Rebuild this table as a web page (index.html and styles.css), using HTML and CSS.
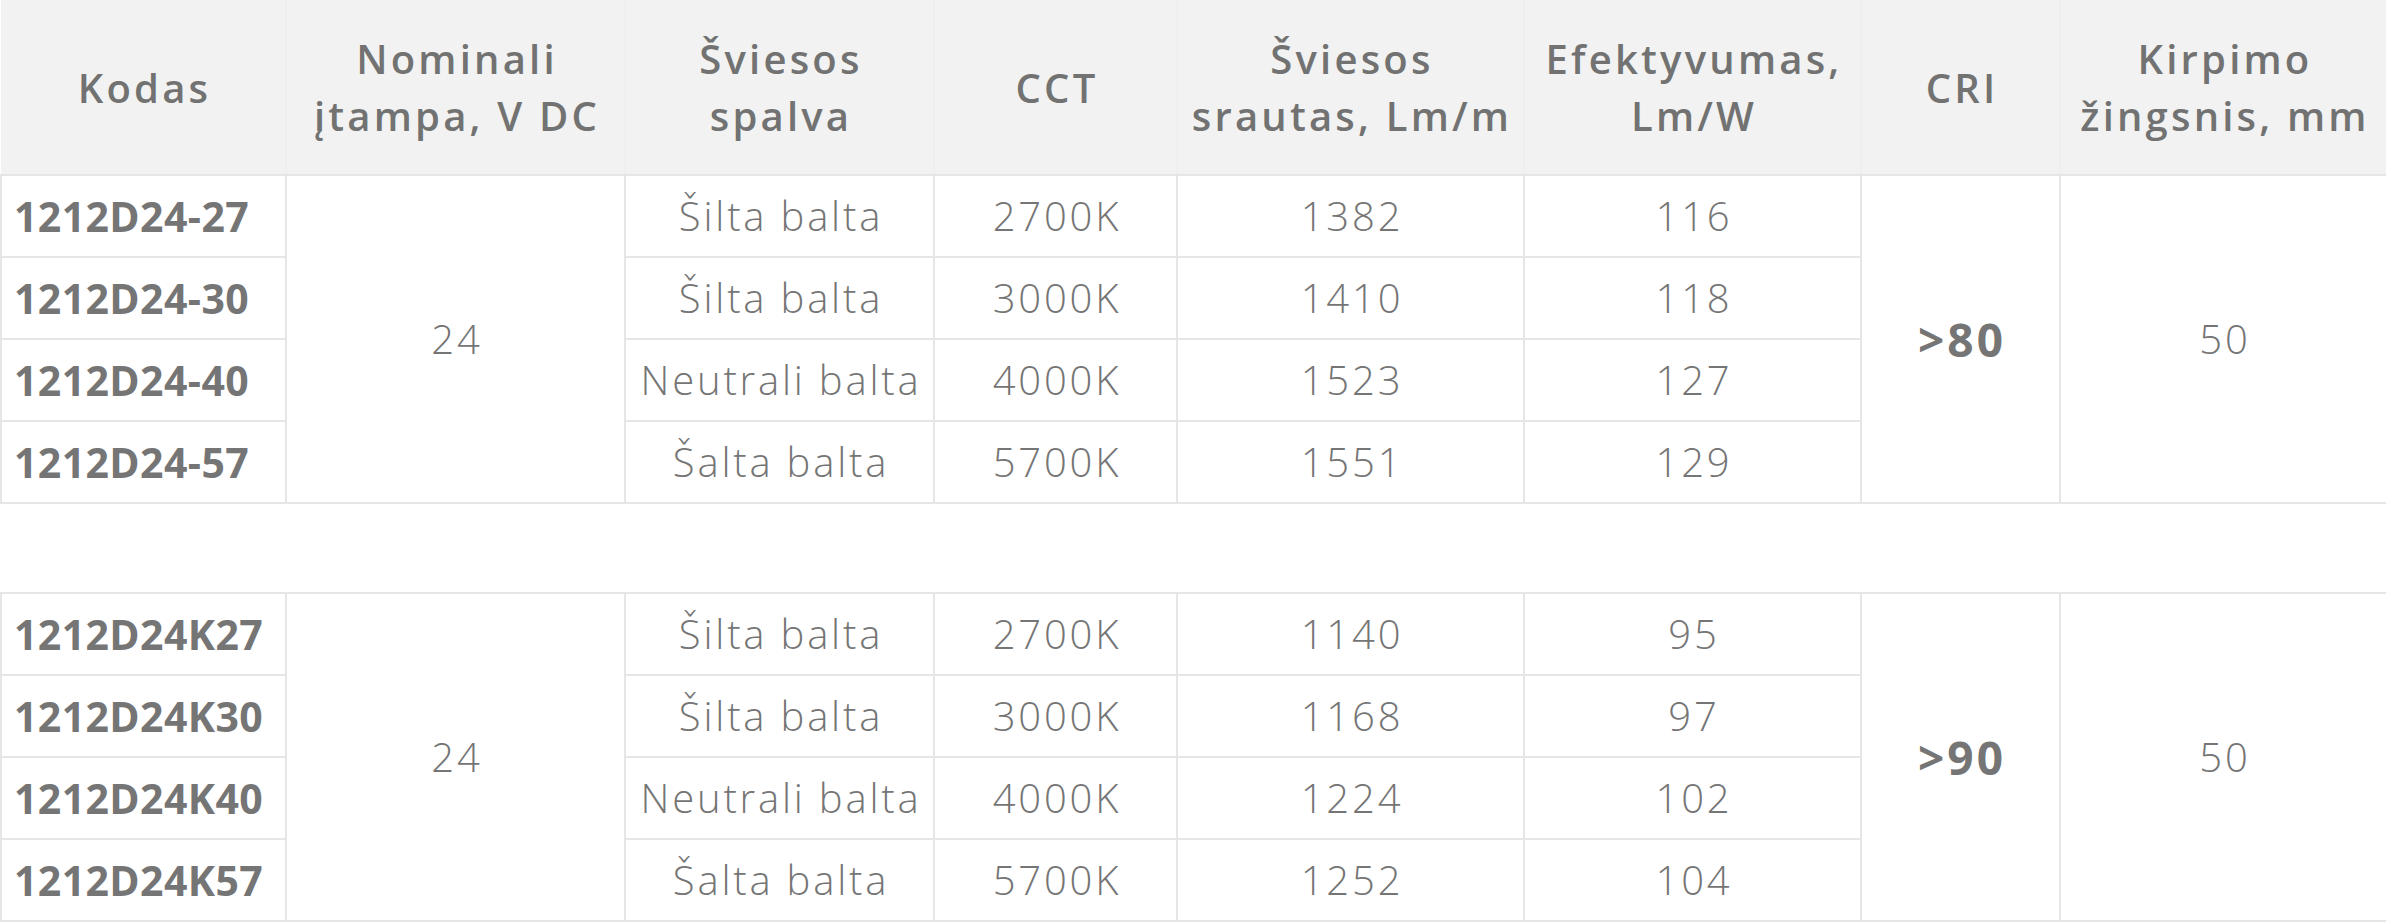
FILE: index.html
```html
<!DOCTYPE html>
<html lang="lt">
<head>
<meta charset="utf-8">
<title>Specifikacijos</title>
<link rel="stylesheet" href="styles.css">
</head>
<body>
<table class="spec">
  <colgroup>
    <col class="c1"><col class="c2"><col class="c3"><col class="c4"><col class="c5"><col class="c6"><col class="c7"><col class="c8">
  </colgroup>
  <thead>
    <tr>
      <th>Kodas</th>
      <th>Nominali<br>įtampa, V DC</th>
      <th>Šviesos<br>spalva</th>
      <th>CCT</th>
      <th>Šviesos<br>srautas, Lm/m</th>
      <th>Efektyvumas,<br>Lm/W</th>
      <th>CRI</th>
      <th>Kirpimo<br>žingsnis, mm</th>
    </tr>
  </thead>
  <tbody>
    <tr>
      <td class="code">1212D24-27</td>
      <td rowspan="4">24</td>
      <td>Šilta balta</td>
      <td>2700K</td>
      <td>1382</td>
      <td>116</td>
      <td rowspan="4" class="cri">&gt;80</td>
      <td rowspan="4">50</td>
    </tr>
    <tr>
      <td class="code">1212D24-30</td>
      <td>Šilta balta</td>
      <td>3000K</td>
      <td>1410</td>
      <td>118</td>
    </tr>
    <tr>
      <td class="code">1212D24-40</td>
      <td>Neutrali balta</td>
      <td>4000K</td>
      <td>1523</td>
      <td>127</td>
    </tr>
    <tr>
      <td class="code">1212D24-57</td>
      <td>Šalta balta</td>
      <td>5700K</td>
      <td>1551</td>
      <td>129</td>
    </tr>
  </tbody>
</table>

<table class="spec second">
  <colgroup>
    <col class="c1"><col class="c2"><col class="c3"><col class="c4"><col class="c5"><col class="c6"><col class="c7"><col class="c8">
  </colgroup>
  <tbody>
    <tr>
      <td class="code">1212D24K27</td>
      <td rowspan="4">24</td>
      <td>Šilta balta</td>
      <td>2700K</td>
      <td>1140</td>
      <td>95</td>
      <td rowspan="4" class="cri">&gt;90</td>
      <td rowspan="4">50</td>
    </tr>
    <tr>
      <td class="code">1212D24K30</td>
      <td>Šilta balta</td>
      <td>3000K</td>
      <td>1168</td>
      <td>97</td>
    </tr>
    <tr>
      <td class="code">1212D24K40</td>
      <td>Neutrali balta</td>
      <td>4000K</td>
      <td>1224</td>
      <td>102</td>
    </tr>
    <tr>
      <td class="code">1212D24K57</td>
      <td>Šalta balta</td>
      <td>5700K</td>
      <td>1252</td>
      <td>104</td>
    </tr>
  </tbody>
</table>
</body>
</html>
```

FILE: styles.css
```css
html, body {
  margin: 0;
  padding: 0;
  background: #ffffff;
}

body {
  font-family: "Open Sans", "Liberation Sans", sans-serif;
  color: #757575;
}

.spec {
  width: 2386px;
  table-layout: fixed;
  border-collapse: collapse;
}

.spec.second {
  margin-top: 88px;
}

.c1 { width: 285px; }
.c2 { width: 339px; }
.c3 { width: 309px; }
.c4 { width: 243px; }
.c5 { width: 347px; }
.c6 { width: 337px; }
.c7 { width: 199px; }
.c8 { width: 327px; }

.spec th {
  background: #f1f2f1;
  color: #727272;
  font-weight: 600;
  font-size: 40px;
  line-height: 57px;
  letter-spacing: 3.2px;
  height: 174px;
  padding: 0 0 0 3px;
  text-align: center;
  vertical-align: middle;
  white-space: nowrap;
  border-left: 2px solid #eef0ee;
  border-right: 2px solid #eef0ee;
  border-bottom: 2px solid #e6e6e6;
}

.spec th:first-child {
  border-left: none;
}

.spec td {
  height: 80px;
  padding: 0 0 0 3px;
  border: 2px solid #e6e6e6;
  font-size: 40px;
  font-weight: 300;
  line-height: 48px;
  letter-spacing: 2.8px;
  text-align: center;
  vertical-align: middle;
  white-space: nowrap;
}

.spec td.code {
  text-align: left;
  padding-left: 12px;
  font-weight: 700;
  font-size: 41px;
  letter-spacing: 0.4px;
}

.spec td.cri {
  font-weight: 700;
  font-size: 46px;
  letter-spacing: 3px;
}
```
